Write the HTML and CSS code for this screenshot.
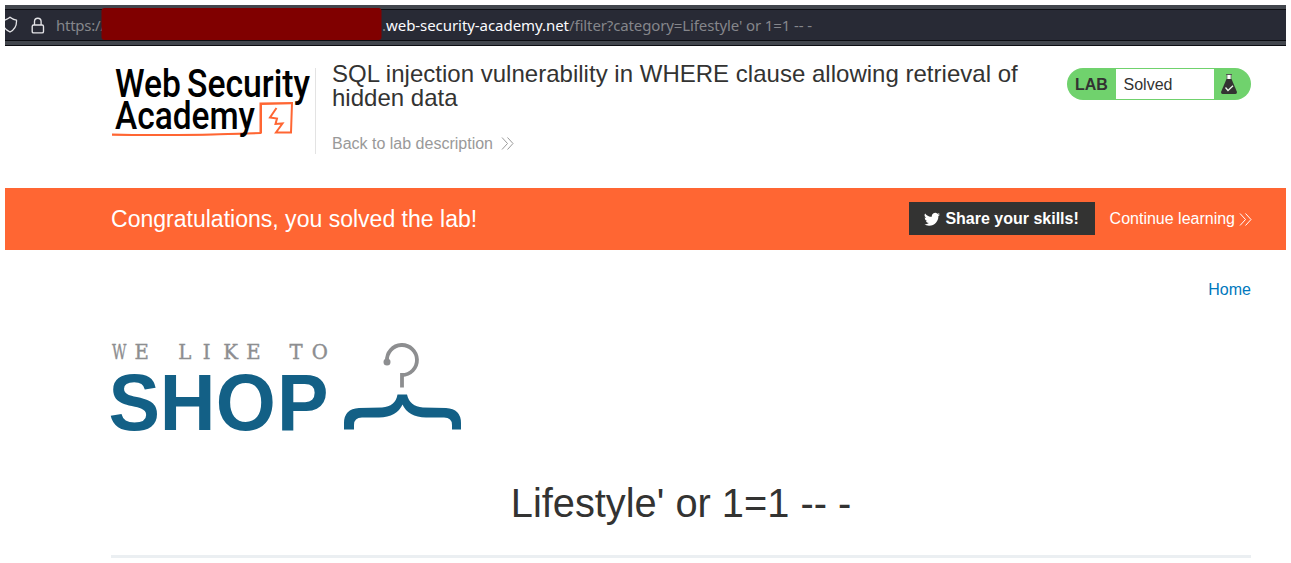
FILE: index.html
```
<!DOCTYPE html>
<html lang="en">
<head>
<meta charset="utf-8">
<title>Web Security Academy</title>
<link rel="stylesheet" href="styles.css">
</head>
<body>
<div class="browser">
  <div class="address">
    <svg class="shield" width="13" height="18" viewBox="0 0 13 18"><path d="M-1 4.2Q2 3.6 5 1.2Q8 3.6 11.5 4.2Q12 12.5 5 16Q0 13.5-1 10.5" fill="none" stroke="#e4e4e7" stroke-width="1.3"/></svg>
    <svg class="lock" width="14" height="18" viewBox="0 0 14 18"><path d="M3.5 8V4.5a3.3 3.3 0 0 1 6.6 0V8M2.6 8h8.5q1.4 0 1.4 1.4v5q0 1.5-1.4 1.5H2.6q-1.4 0-1.4-1.5v-5Q1.200 8 2.600 8Z" fill="none" stroke="#e4e4e7" stroke-width="1.35"/></svg>
    <svg class="url" width="770" height="30" viewBox="0 0 770 30">
      <text class="dim" x="0" y="21" textLength="50">https://</text>
      <rect x="45.500" y="-2" width="280" height="32" rx="3" fill="#800000"/>
      <text class="dim" x="326" y="21">.</text>
      <text class="host" x="330" y="21" textLength="183">web-security-academy.net</text>
      <text class="dim" x="513" y="21" textLength="243">/filter?category=Lifestyle' or 1=1 -- -</text>
    </svg>
  </div>
</div>
<header class="lab-header">
  <svg class="academy" width="204" height="80" viewBox="0 0 204 80">
    <g class="academy-text">
      <text x="4" y="28.500" textLength="66" lengthAdjust="spacingAndGlyphs">Web</text>
      <text x="76" y="28.500" textLength="123" lengthAdjust="spacingAndGlyphs">Security</text>
    </g>
    <path d="M1 66.500Q60 68 149.500 65V35.500L181 35L180 64.500H165L171.500 55.500L164.500 56L166 50.500L159 49.500L165.500 40" fill="none" stroke="#ff6633" stroke-width="2"/>
    <path d="M1 67Q70 68.500 149 65M150.500 36V65M150 36.500L181 35.500" fill="none" stroke="#ff6633" stroke-width="1"/>
    <text class="academy-text" x="4" y="61" textLength="140" lengthAdjust="spacingAndGlyphs">Academy</text>
  </svg>
  <div class="title">
    <h2>SQL injection vulnerability in WHERE clause allowing retrieval of hidden data</h2>
    <a class="back">Back to lab description <svg width="13" height="13" viewBox="0 0 13 13"><path d="M1 .5L6.500 6.500L1 12.500M6.500 .5L12 6.500L6.500 12.500" fill="none" stroke="currentColor"/></svg></a>
  </div>
  <div class="status">
    <b>LAB</b><span>Solved</span>
    <svg width="16" height="20" viewBox="0 0 16 20"><path d="M5 .5h6" stroke="#555" fill="none"/><path d="M6 1V5.500H10V1" fill="#fff" stroke="#666" stroke-width=".8"/><path d="M5.500 5H10.500L16 18Q16 20 14.500 20H1.500Q0 20 0 18Z" fill="#333332"/><path d="M4.500 13.500L7 16.500L12 11.700" fill="none" stroke="#e8f8e8" stroke-width="1.300"/></svg>
  </div>
</header>
<section class="banner">
  <h4>Congratulations, you solved the lab!</h4>
  <a class="share"><svg width="16" height="14" viewBox="0 1.500 24 20"><path d="M23.950 4.570a10 10 0 0 1-2.820.770 4.960 4.960 0 0 0 2.160-2.720 9.900 9.900 0 0 1-3.120 1.180 4.920 4.920 0 0 0-8.380 4.480A13.900 13.900 0 0 1 1.640 3.160a4.900 4.900 0 0 0 1.520 6.570 4.900 4.900 0 0 1-2.230-.610v.060a4.920 4.920 0 0 0 3.950 4.830 5 5 0 0 1-2.210.080 4.940 4.940 0 0 0 4.600 3.420A9.870 9.870 0 0 1 0 19.540a14 14 0 0 0 7.550 2.210c9.050 0 14-7.500 14-13.980l-.020-.640a9.900 9.900 0 0 0 2.420-2.560z" fill="#fff"/></svg>Share your skills!</a>
  <a class="continue">Continue learning<svg width="13" height="13" viewBox="0 0 13 13"><path d="M1 .5L6.500 6.500L1 12.500M6.500 .5L12 6.500L6.500 12.500" fill="none" stroke="currentColor"/></svg></a>
</section>
<main class="shop">
  <nav><a>Home</a></nav>
  <svg class="shop-logo" width="352" height="92" viewBox="0 0 352 92">
    <g class="tagline" transform="scale(.96 1)"><text y="16"><tspan x="1" textLength="15" lengthAdjust="spacingAndGlyphs">W</tspan><tspan x="24.500">E</tspan></text><text x="70 95.500 117 141" y="16">LIKE</text><text x="186 209" y="16">TO</text></g>
    <text class="shop-word" transform="scale(.965 1)" x="-2.600 50.500 108.500 172" y="87">SHOP</text>
    <path d="M276 18A15 15 0 1 1 291 32V44.500" fill="none" stroke="#8d8e90" stroke-width="3.800"/>
    <circle cx="276" cy="19" r="3.500" fill="#8d8e90"/>
    <path d="M286.500 51.500H296C298 60 303 63.500 312 64.500L335 65Q350 66 350 80V86.500H341V82Q341 74.500 333 74.500H315Q297 74 291.500 61.500Q286 74 268 74.500H251Q243 74.500 243 82V86.500H233V80Q233 66 248 65L271 64.500C280 63.500 285 60 286.500 51.500Z" fill="#136086"/>
  </svg>
  <h1>Lifestyle' or 1=1 -- -</h1>
</main>
</body>
</html>
```
FILE: styles.css
```
* { box-sizing: border-box; }
body { margin: 0; padding: 5px; height: 563px; overflow: hidden; background: #fff; color: #333332; font-family: "Liberation Sans", Arial, sans-serif; font-size: 16px; }
h1, h2, h4 { margin: 0; font-weight: 400; }
svg { flex: none; }
.browser { height: 41px; padding-top: 4px; background: #42464d; border-bottom: 1px solid #0c0d12; }
.address { height: 32px; display: flex; align-items: flex-start; background: #282a35; border-top: 1px solid #0c0d12; border-bottom: 1px solid #0c0d12; }
.shield { margin-top: 6px; }
.lock { margin: 7px 0 0 13px; }
.url { margin-left: 11px; overflow: visible; font-family: "Noto Sans", sans-serif; font-size: 15px; }
.dim { fill: #85868b; }
.host { fill: #fbfbfe; }
.lab-header { height: 142px; padding: 22px 35px 0 106px; display: flex; align-items: flex-start; }
.academy { overflow: visible; }
.academy-text { font-family: "Roboto", sans-serif; font-size: 38px; font-weight: 500; fill: #000; }
.title { width: 735px; height: 86px; padding-left: 16px; border-left: 1px solid #e3e3e3; }
.title h2 { width: 700px; font-size: 24px; line-height: 24px; letter-spacing: .015px; margin-top: -6px; }
.back { display: flex; align-items: center; gap: 8px; margin-top: 24px; line-height: 19px; color: #999; }
.back svg { margin-bottom: 1px; }
.status { display: flex; align-items: center; width: 184px; height: 32px; margin-left: auto; padding: 1px 14px 1px 8px; border-radius: 16px; background: #70d26d; }
.status b { width: 41px; padding-top: 2px; }
.status span { width: 98px; height: 30px; padding-left: 7.5px; line-height: 31px; background: #fff; }
.status svg { margin-left: 7px; }
.banner { height: 62px; padding: 0 34px 0 106px; display: flex; align-items: center; background: #ff6633; color: #fff; }
.banner h4 { font-size: 23.04px; margin-right: auto; }
.share { width: 186px; height: 33px; display: flex; align-items: center; justify-content: center; gap: 5px; margin-right: 14px; margin-bottom: 1px; background: #333332; font-weight: 700; }
.continue { display: flex; align-items: center; gap: 4px; margin-left: 1px; }
.shop { margin: 0 35px 0 106px; }
.shop nav { height: 93px; padding-top: 30px; text-align: right; line-height: 19px; color: #0078bd; }
.shop-logo { display: block; overflow: visible; }
.tagline { font-family: "DejaVu Serif", serif; font-size: 20.5px; fill: #8d8e90; stroke: #8d8e90; stroke-width: .4; }
.shop-word { font-size: 80px; font-weight: 700; fill: #136086; }
.shop h1 { height: 123px; padding-top: 45px; text-align: center; font-size: 39.8px; line-height: 46px; border-bottom: 3px solid #ebeff2; }
```
